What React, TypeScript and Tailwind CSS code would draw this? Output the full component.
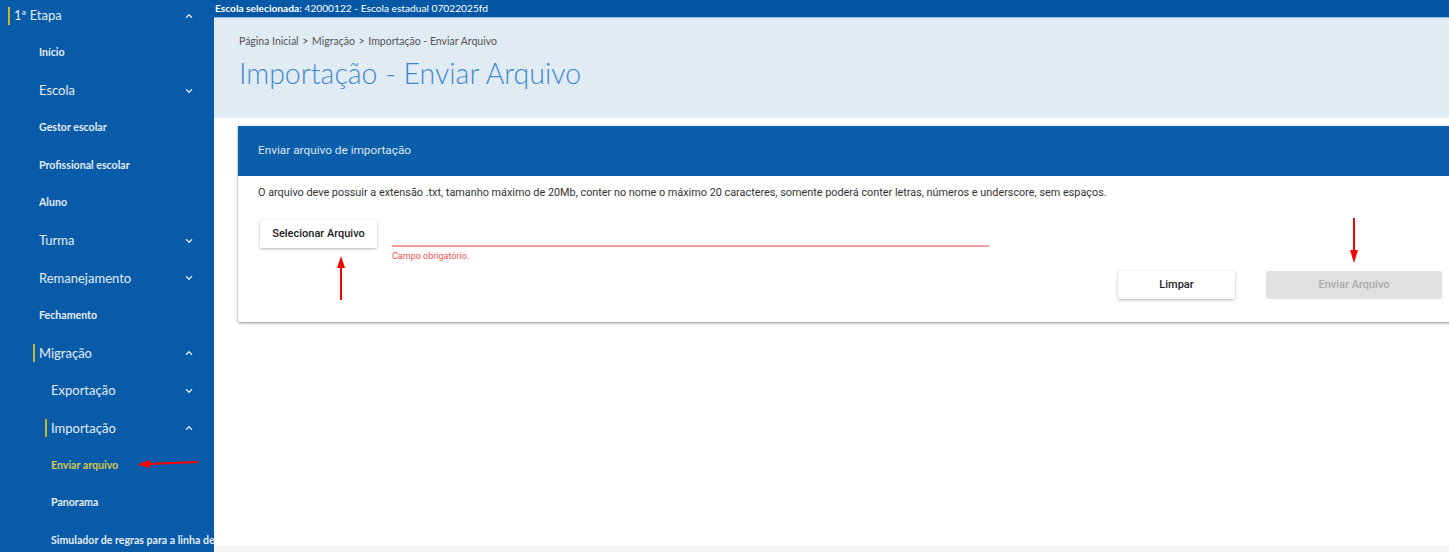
import type { ReactNode } from 'react'

type NavItem = {
  label: string
  indent: 0 | 1 | 2
  size: 'lg' | 'sm'
  chevron?: 'up' | 'down'
  marked?: boolean
  active?: boolean
}

const navItems: NavItem[] = [
  { label: '1ª Etapa', indent: 0, size: 'lg', chevron: 'up', marked: true },
  { label: 'Início', indent: 1, size: 'sm' },
  { label: 'Escola', indent: 1, size: 'lg', chevron: 'down' },
  { label: 'Gestor escolar', indent: 1, size: 'sm' },
  { label: 'Profissional escolar', indent: 1, size: 'sm' },
  { label: 'Aluno', indent: 1, size: 'sm' },
  { label: 'Turma', indent: 1, size: 'lg', chevron: 'down' },
  { label: 'Remanejamento', indent: 1, size: 'lg', chevron: 'down' },
  { label: 'Fechamento', indent: 1, size: 'sm' },
  { label: 'Migração', indent: 1, size: 'lg', chevron: 'up', marked: true },
  { label: 'Exportação', indent: 2, size: 'lg', chevron: 'down' },
  { label: 'Importação', indent: 2, size: 'lg', chevron: 'up', marked: true },
  { label: 'Enviar arquivo', indent: 2, size: 'sm', active: true },
  { label: 'Panorama', indent: 2, size: 'sm' },
  { label: 'Simulador de regras para a linha de corte', indent: 2, size: 'sm' },
]

const indentClass = ['pl-[14px]', 'pl-[39px]', 'pl-[51px]']
const markerClass = ['left-[8px]', 'left-[33px]', 'left-[45px]']

function Chevron({ dir }: { dir: 'up' | 'down' }) {
  return (
    <svg width="8" height="5" viewBox="0 0 8 5" className="absolute left-[185px] top-1/2 -translate-y-1/2">
      <polyline
        points={dir === 'up' ? '1,4.2 4,1.2 7,4.2' : '1,0.8 4,3.8 7,0.8'}
        fill="none"
        stroke="#dfe8f3"
        strokeWidth="1.3"
      />
    </svg>
  )
}

function SideNav() {
  return (
    <aside className="w-[214px] shrink-0 overflow-hidden bg-[#075ba8] font-['Lato',sans-serif]">
      <ul className="-mt-[3px]">
        {navItems.map((item) => (
          <li
            key={item.label}
            className={`relative flex h-[37.5px] items-center overflow-hidden whitespace-nowrap ${indentClass[item.indent]} ${
              item.size === 'lg'
                ? 'text-[13px] text-[#e4ecf6]'
                : 'text-[10.6px] font-bold text-[#e4ecf6]'
            }`}
          >
            {item.marked && (
              <span className={`absolute top-1/2 h-[18px] w-[2px] -translate-y-1/2 bg-[#c9b636] ${markerClass[item.indent]}`} />
            )}
            <span className={item.active ? 'text-[#d8c64a]' : ''}>{item.label}</span>
            {item.chevron && <Chevron dir={item.chevron} />}
          </li>
        ))}
      </ul>
    </aside>
  )
}

function Button({ children, disabled, className }: { children: ReactNode; disabled?: boolean; className: string }) {
  return (
    <button
      type="button"
      className={`flex h-[28px] items-center justify-center rounded-[2px] text-[11px] font-medium ${
        disabled
          ? 'bg-[#e0e0e0] text-[#acacac]'
          : 'bg-white text-[#222] shadow-[0_1px_3px_rgba(0,0,0,0.3)]'
      } ${className}`}
    >
      {children}
    </button>
  )
}

function UploadCard() {
  return (
    <section className="ml-[24px] mt-[8px] w-[1240px] shrink-0 rounded-[2px] bg-white font-['Roboto',sans-serif] shadow-[0_1px_3px_rgba(0,0,0,0.45)]">
      <header className="flex h-[50px] items-center bg-[#0a5eaa] pl-[20px] text-[11.8px] text-[#dbe6f3]">
        Enviar arquivo de importação
      </header>
      <div className="pl-[20px] pr-[36px] pt-[10px] pb-[23px]">
        <p className="text-[10.85px] leading-[14px] text-[#333]">
          O arquivo deve possuir a extensão .txt, tamanho máximo de 20Mb, conter no nome o máximo 20 caracteres,
          somente poderá conter letras, números e underscore, sem espaços.
        </p>
        <div className="mt-[20px] flex h-[51px] items-start">
          <Button className="ml-[2px] w-[117px]">Selecionar Arquivo</Button>
          <div className="ml-[15px] w-[597px]">
            <div className="h-[25px]" />
            <div className="h-[1.5px] bg-[#f49a9a]" />
            <p className="mt-[4.5px] text-[9px] leading-[11px] text-[#f0534f]">Campo obrigatório.</p>
          </div>
        </div>
        <div className="flex justify-end gap-[31px]">
          <Button className="w-[117px]">Limpar</Button>
          <Button disabled className="w-[176px]">
            Enviar Arquivo
          </Button>
        </div>
      </div>
    </section>
  )
}

function Annotations() {
  return (
    <svg
      width="1449"
      height="552"
      viewBox="0 0 1449 552"
      className="pointer-events-none absolute left-0 top-0"
    >
      <g fill="#ff0000" stroke="#ff0000">
        <line x1="341" y1="300" x2="341" y2="266" strokeWidth="2" />
        <polygon points="341,256 337,268 345,268" stroke="none" />
        <line x1="1354" y1="218" x2="1354" y2="252" strokeWidth="2" />
        <polygon points="1354,263 1350,250 1358,250" stroke="none" />
        <line x1="198" y1="462" x2="148" y2="464" strokeWidth="2" />
        <polygon points="137,464.5 150,460 150,468" stroke="none" />
      </g>
    </svg>
  )
}

export default function App() {
  return (
    <div className="relative flex h-[552px] w-[1449px] overflow-hidden bg-white">
      <SideNav />
      <main className="flex min-w-0 flex-1 flex-col overflow-hidden">
        <div className="h-[17px] shrink-0 whitespace-nowrap bg-[#0558a6] pl-[1px] font-['Lato',sans-serif] text-[10.2px] leading-[16px] text-white">
          <span className="font-bold">Escola selecionada:</span> 42000122 - Escola estadual 07022025fd
        </div>
        <div className="h-[101px] shrink-0 border-t border-[#8fb6dd] bg-[#e1ebf4] pl-[25px] font-['Lato',sans-serif]">
          <nav className="pt-[16px] text-[10.5px] leading-[14px] text-[#555]">
            Página Inicial <span className="mx-[1px]">&gt;</span> Migração <span className="mx-[1px]">&gt;</span> Importação - Enviar Arquivo
          </nav>
          <h1 className="mt-[9px] text-[28.5px] font-light leading-[32px] text-[#3f88cf]">Importação - Enviar Arquivo</h1>
        </div>
        <div className="flex flex-1 flex-col">
          <UploadCard />
          <div className="flex-1" />
          <div className="h-[6px] bg-[#f3f3f3]" />
        </div>
      </main>
      <Annotations />
    </div>
  )
}
